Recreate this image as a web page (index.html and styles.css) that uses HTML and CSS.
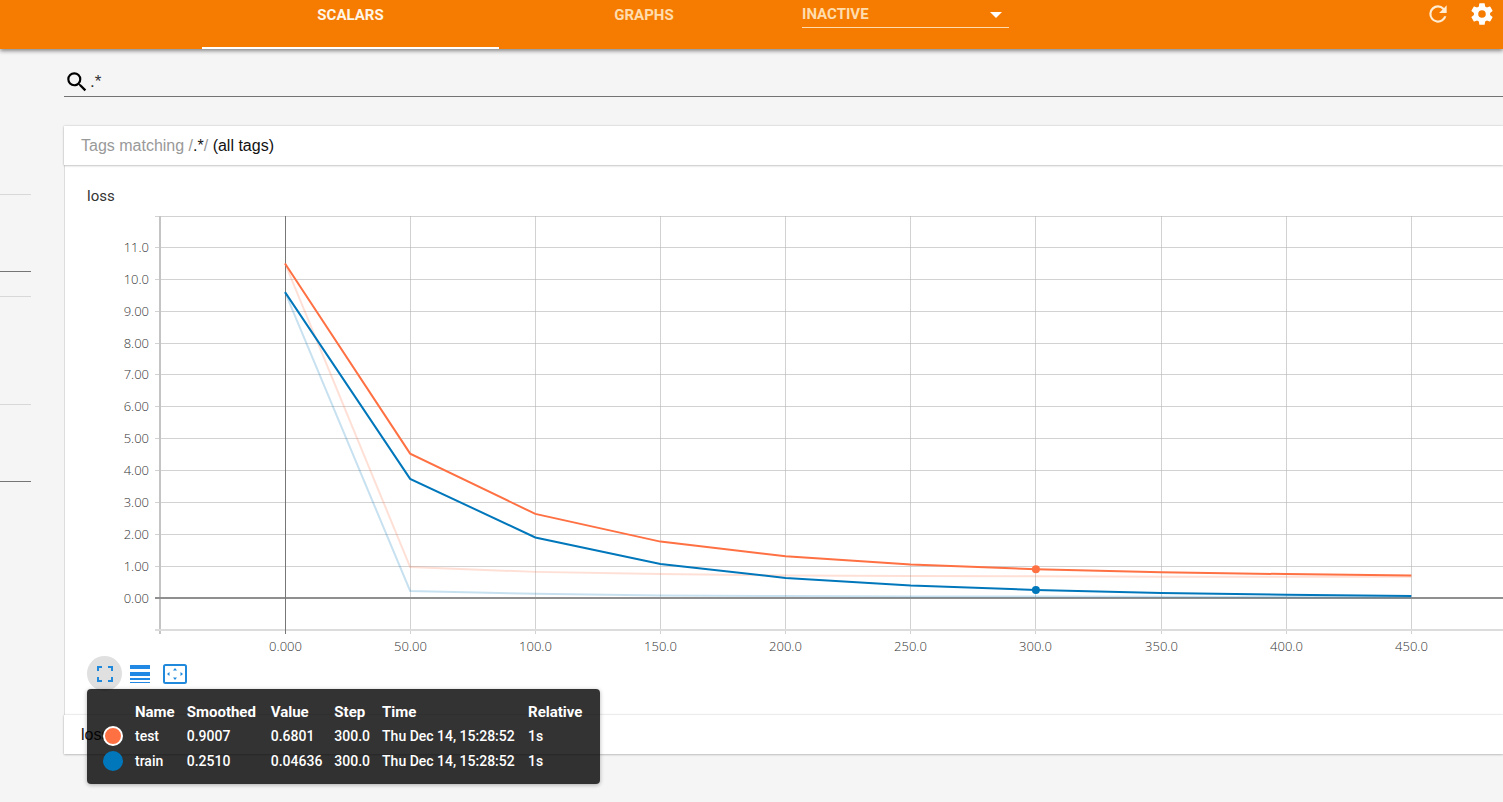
FILE: index.html
```html
<!DOCTYPE html>
<html lang="en">
<head>
<meta charset="utf-8">
<title>TensorBoard</title>
<link rel="stylesheet" href="styles.css">
</head>
<body>
<header class="toolbar">
  <nav class="tabs">
    <a class="tab active" href="#scalars">SCALARS</a>
    <a class="tab" href="#graphs">GRAPHS</a>
  </nav>
  <div class="dropdown">
    <select aria-label="Inactive dashboards"><option>INACTIVE</option></select>
    <svg class="caret" width="12" height="6" viewBox="0 0 12 6"><path d="M0 0h12L6 6z" fill="#fff"/></svg>
  </div>
  <div class="actions">
    <button class="icon-button" aria-label="Reload"><svg width="26" height="26" viewBox="0 0 24 24"><path fill="#ffecd2" d="M17.65 6.35A7.96 7.96 0 0 0 12 4a8 8 0 1 0 7.73 10h-2.08A6 6 0 1 1 12 6c1.66 0 3.14.69 4.22 1.78L13 11h7V4z"/></svg></button>
    <button class="icon-button" aria-label="Settings"><svg width="26" height="26" viewBox="0 0 24 24"><path fill="#fff" d="M19.43 12.98c.04-.32.07-.64.07-.98s-.03-.66-.07-.98l2.11-1.65c.19-.15.24-.42.12-.64l-2-3.46c-.12-.22-.39-.3-.61-.22l-2.49 1c-.52-.4-1.08-.73-1.69-.98l-.38-2.65A.49.49 0 0 0 14 2h-4c-.25 0-.46.18-.49.42l-.38 2.65c-.61.25-1.17.59-1.69.98l-2.49-1c-.23-.09-.49 0-.61.22l-2 3.46c-.13.22-.07.49.12.64l2.11 1.65c-.04.32-.07.65-.07.98s.03.66.07.98l-2.11 1.65c-.19.15-.24.42-.12.64l2 3.46c.12.22.39.3.61.22l2.49-1c.52.4 1.08.73 1.69.98l.38 2.65c.03.24.24.42.49.42h4c.25 0 .46-.18.49-.42l.38-2.65c.61-.25 1.17-.59 1.69-.98l2.49 1c.23.09.49 0 .61-.22l2-3.46c.12-.22.07-.49-.12-.64zM12 15.5a3.5 3.5 0 1 1 0-7 3.5 3.5 0 0 1 0 7z"/></svg></button>
  </div>
</header>
<div class="layout">
  <aside class="sidebar">
    <div class="option-group group-display"></div>
    <div class="option-group group-smoothing"></div>
    <div class="option-group group-gap"></div>
    <div class="option-group group-axis"></div>
    <div class="option-group group-runs"></div>
  </aside>
  <main class="content">
    <div class="search">
      <svg width="26" height="26" viewBox="0 0 24 24"><path d="M15.5 14h-.79l-.28-.27A6.47 6.47 0 0 0 16 9.5 6.5 6.5 0 1 0 9.5 16c1.61 0 3.09-.59 4.23-1.57l.27.28v.79l5 4.99L20.49 19zm-6 0a4.5 4.5 0 1 1 0-9 4.5 4.5 0 0 1 0 9z"/></svg>
      <input type="text" value=".*" aria-label="Filter tags">
    </div>
    <button class="pane-header"><span class="muted">Tags matching /</span>.*<span class="muted">/</span> (all tags)</button>
    <section class="pane-body">
      <h2 class="chart-title">loss</h2>
      <svg class="chart" id="chart" role="img" aria-label="loss"></svg>
      <div class="chart-tools">
        <button class="tool selected" aria-label="Toggle full size"><svg width="18" height="18" viewBox="0 0 18 18"><path d="M2 6V2h4M12 2h4v4M16 12v4h-4M6 16H2v-4" fill="none" stroke="#2189dc" stroke-width="2"/></svg></button>
        <button class="tool" aria-label="Toggle log scale"><svg width="20" height="18" viewBox="0 0 20 18"><path d="M0 0h20v4H0zM0 7h20v4H0zM0 13h20v2H0zM0 17h20v1H0z" fill="#2189e4"/></svg></button>
        <button class="tool" aria-label="Fit domain to data"><svg width="24" height="20" viewBox="0 0 24 20"><rect x="1" y="1" width="22" height="18" rx="1.5" fill="none" stroke="#2189dc" stroke-width="2"/><path d="M12 4l2 2.5h-4zM12 16l2-2.5h-4zM4 10l2.5-2v4zM20 10l-2.500-2v4z" fill="#2189dc"/></svg></button>
        <div class="tooltip">
          <table>
            <thead><tr><th></th><th>Name</th><th class="col-smoothed">Smoothed</th><th>Value</th><th>Step</th><th class="col-time">Time</th><th class="col-relative">Relative</th></tr></thead>
            <tbody>
              <tr><td><span class="swatch test"></span></td><td>test</td><td>0.9007</td><td>0.6801</td><td>300.0</td><td>Thu Dec 14, 15:28:52</td><td>1s</td></tr>
              <tr><td><span class="swatch train"></span></td><td>train</td><td>0.2510</td><td>0.04636</td><td>300.0</td><td>Thu Dec 14, 15:28:52</td><td>1s</td></tr>
            </tbody>
          </table>
        </div>
      </div>
    </section>
    <button class="pane-header">loss</button>
  </main>
</div>
<script src="chart.js"></script>
</body>
</html>
```
FILE: styles.css
```css
* { box-sizing: border-box; }
body {
  margin: 0;
  min-height: 100vh;
  background: #f5f5f5;
  font-family: Roboto, "Liberation Sans", sans-serif;
  overflow: hidden;
}
button { border: 0; padding: 0; background: none; font: inherit; color: inherit; }

.toolbar {
  position: relative;
  display: flex;
  height: 49px;
  padding-left: 202px;
  background: #f57c00;
  box-shadow: 0 2px 4px rgba(0, 0, 0, 0.45);
}
.tabs { display: flex; }
.tab {
  width: 297px;
  padding-top: 6px;
  border-bottom: 2px solid transparent;
  color: #ffdcae;
  font-size: 15px;
  font-weight: 700;
  line-height: 18px;
  text-align: center;
  text-decoration: none;
}
.tab + .tab { width: 290px; }
.tab.active { border-color: #fff; color: #fff5e6; }
.dropdown {
  position: relative;
  width: 207px;
  height: 28px;
  margin-left: 13px;
  border-bottom: 1px solid #ffdcae;
}
.dropdown select {
  appearance: none;
  width: 100%;
  height: 28px;
  border: 0;
  padding: 0;
  background: transparent;
  color: #ffdcae;
  font: 700 15px Roboto, sans-serif;
}
.caret { position: absolute; right: 7px; top: 12px; }
.actions { display: flex; gap: 18px; margin-left: auto; padding-right: 8px; }
.icon-button { width: 26px; height: 28px; }
.icon-button svg { display: block; }

.layout { display: grid; grid-template-columns: 31px minmax(0, 1fr); column-gap: 33px; }
.option-group { border-bottom: 1px solid #d8d8d8; }
.group-display { height: 146px; }
.group-smoothing { height: 77px; border-color: #757575; }
.group-gap { height: 25px; }
.group-axis { height: 108px; }
.group-runs { height: 77px; border-color: #757575; }

.search {
  display: flex;
  align-items: center;
  height: 32px;
  margin: 16px 0 29px;
  padding-top: 2px;
  border-bottom: 1px solid #737373;
}
.search svg { flex: none; }
.search input {
  flex: 1;
  min-width: 0;
  border: 0;
  padding: 0;
  background: transparent;
  color: #333;
  font: 17px "Liberation Sans", sans-serif;
}
.pane-header {
  position: relative;
  display: block;
  width: 100%;
  height: 39px;
  padding-left: 17px;
  background: #fff;
  box-shadow: 0 0 2px rgba(0, 0, 0, 0.2), 0 1px 2px rgba(0, 0, 0, 0.16);
  color: #111;
  font: 16px "Liberation Sans", sans-serif;
  text-align: left;
}
.muted { color: #999; }
.pane-body {
  padding: 22px 0 24px 22px;
  border-left: 1px solid #ddd;
  background: #fff;
}
.chart-title {
  margin: 0;
  font: 15px/19px Roboto, sans-serif;
  color: #333;
}
.chart { display: block; width: 100%; height: 450px; }
.grid { stroke: #b4b4b4; stroke-opacity: 0.6; stroke-width: 1; }
.axis { stroke: #c4c4c4; stroke-width: 2; }
.frame { stroke: #dcdcdc; stroke-width: 2; }
.zero { stroke: #8f8f8f; stroke-width: 2; }
.zero-x { stroke: #777; stroke-width: 1; }
.tick { fill: #333; font: 300 13px "Open Sans", sans-serif; }
.series { fill: none; stroke-width: 2; }
.raw { opacity: 0.22; }

.chart-tools { position: relative; display: flex; align-items: center; height: 35px; }
.tool { display: flex; align-items: center; justify-content: center; width: 35px; height: 35px; border-radius: 50%; }
.selected { background: #e0e0e0; }
.tooltip {
  position: absolute;
  top: 33px;
  left: 0;
  z-index: 2;
  padding: 11px 10px;
  border-radius: 4px;
  background: rgba(0, 0, 0, 0.8);
  box-shadow: 0 1px 4px rgba(0, 0, 0, 0.3);
  color: #fff;
  white-space: nowrap;
}
.tooltip table { border-collapse: collapse; }
.tooltip th { height: 23px; min-width: 32px; padding: 0 6px; font-size: 15px; font-weight: 700; line-height: 18px; text-align: left; }
.tooltip .col-smoothed { min-width: 84px; }
.tooltip .col-time { min-width: 146px; }
.tooltip .col-relative { min-width: 68px; }
.tooltip td { height: 25px; padding: 0 6px; font-size: 14px; font-weight: 500; line-height: 18px; }
.swatch { display: block; width: 20px; height: 20px; border-radius: 50%; }
.test { border: 2px solid #fff; background: #ff7043; }
.train { background: #0077bb; }
```
FILE: chart.js
```js
const svg = document.getElementById('chart');
const left = 73, top0 = 10, bottom = 424, zeroX = 198, zeroY = 392;
const px = step => zeroX + step * 2.503;
const py = value => zeroY - value * 31.86;

function add(tag, attrs, text) {
  const el = document.createElementNS('http://www.w3.org/2000/svg', tag);
  for (const key in attrs) el.setAttribute(key, attrs[key]);
  if (text) el.textContent = text;
  svg.appendChild(el);
}
function line(cls, x1, y1, x2, y2) {
  add('line', { class: cls, x1, y1, x2, y2 });
}

line('grid', left - 5, top0 + 0.5, '100%', top0 + 0.5);
for (let v = 0; v <= 11; v++) {
  const y = Math.floor(py(v)) + 0.5;
  if (v) line('grid', left - 5, y, '100%', y);
  add('text', { class: 'tick', x: 62, y: y + 4, 'text-anchor': 'end' }, v >= 10 ? v.toFixed(1) : v.toFixed(2));
}
for (let s = 0; s <= 450; s += 50) {
  const x = Math.floor(px(s)) + 0.5;
  line('grid', x, top0, x, bottom + 4);
  add('text', { class: 'tick', x, y: 445, 'text-anchor': 'middle' }, s === 0 ? '0.000' : s < 100 ? s.toFixed(2) : s.toFixed(1));
}
line('axis', left, top0, left, bottom + 4);
line('frame', left - 5, bottom, '100%', bottom);
line('zero', left - 5, zeroY, '100%', zeroY);
line('zero-x', zeroX + 0.5, top0, zeroX + 0.5, bottom + 4);

const series = [
  ['#ff7043', 'series raw', [10.5, 0.97, 0.82, 0.75, 0.71, 0.69, 0.68, 0.67, 0.67, 0.67]],
  ['#0077bb', 'series raw', [9.6, 0.22, 0.13, 0.08, 0.06, 0.05, 0.046, 0.04, 0.03, 0.02]],
  ['#ff7043', 'series', [10.5, 4.53, 2.64, 1.77, 1.31, 1.05, 0.9007, 0.81, 0.75, 0.71]],
  ['#0077bb', 'series', [9.6, 3.74, 1.9, 1.07, 0.63, 0.39, 0.251, 0.16, 0.1, 0.06]]
];
for (const [stroke, cls, values] of series) {
  add('polyline', { class: cls, stroke, points: values.map((v, i) => px(i * 50) + ',' + py(v)).join(' ') });
}
add('circle', { cx: px(300), cy: py(0.9007), r: 4, fill: '#ff7043' });
add('circle', { cx: px(300), cy: py(0.251), r: 4, fill: '#0077bb' });
```
